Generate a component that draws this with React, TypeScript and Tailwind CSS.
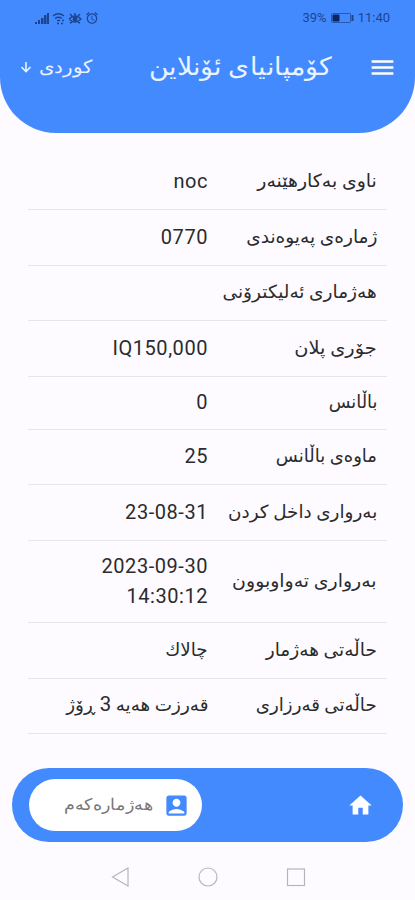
import React from 'react';
import { MdAccountBox, MdAlarm, MdHome, MdMenu } from 'react-icons/md';

interface AccountRow {
    label: string;
    value: React.ReactNode;
    height: string;
    labelScale: string;
    rtlValue?: boolean;
}

const rows: AccountRow[] = [
    { label: 'ناوی بەکارهێنەر', value: 'noc', height: 'h-14', labelScale: 'scale-x-[1.05]' },
    { label: 'ژمارەی پەیوەندی', value: '0770', height: 'h-14', labelScale: 'scale-x-[1.03]' },
    { label: 'هەژماری ئەلیکترۆنی', value: '', height: 'h-[55px]', labelScale: 'scale-x-[1.03]' },
    { label: 'جۆری پلان', value: 'IQ150,000', height: 'h-14', labelScale: 'scale-x-[1.075]' },
    { label: 'باڵانس', value: '0', height: 'h-[53px]', labelScale: 'scale-x-[.985]' },
    { label: 'ماوەی باڵانس', value: '25', height: 'h-[55px]', labelScale: 'scale-x-100' },
    { label: 'بەرواری داخل کردن', value: '23-08-31', height: 'h-14', labelScale: 'scale-x-[1.02]' },
    { label: 'بەرواری تەواوبوون', value: '2023-09-30 14:30:12', height: 'h-[82px]', labelScale: 'scale-x-[1.05]' },
    { label: 'حاڵەتی هەژمار', value: 'چالاك', height: 'h-14', labelScale: 'scale-x-[1.03]', rtlValue: true },
    {
        label: 'حاڵەتی قەرزاری',
        value: <>قەرزت هەیە <span className="text-xl leading-none">3</span> ڕۆژ</>,
        height: 'h-[55px]',
        labelScale: 'scale-x-[1.01]',
        rtlValue: true,
    },
];

function StatusBar() {
    return (
        <div className="flex h-9 items-center justify-between pl-[35px] pr-[25px] text-[#1d458f]">
            <div className="flex items-center gap-[3px]">
                <svg width="14" height="13" viewBox="0 0 14 13" fill="currentColor">
                    <path d="M0 10h2v2H0zM3 8h2v4H3zM6 6h2.500v6H6zM9 3h2.500v9H9zM12 1h2v11h-2z" />
                </svg>
                <svg width="13" height="13" viewBox="0 0 13 13" fill="none" stroke="currentColor" strokeWidth="1.5">
                    <path d="M1 4Q6.500-.5 12 4M3 6.500Q6.500 4 10 6.500M5 8.500h3M5 11.500h2M9 11.500h2M10 8.500h2" />
                </svg>
                <svg width="14" height="13" viewBox="0 0 14 13" fill="none" stroke="currentColor" strokeWidth="1.5">
                    <path d="M1 7Q7 1 13 7Q7 13 1 7M7 1v3M2 2l2 2M12 2l-2 2M2 11l2-1M12 11l-2-1" />
                    <circle cx="7" cy="7" r="1.700" fill="currentColor" />
                </svg>
                <MdAlarm size={14} />
            </div>
            <div className="flex items-center gap-1 font-[Roboto] text-[13px]">
                <span>39%</span>
                <svg width="23" height="10" viewBox="0 0 23 10" fill="none" stroke="currentColor">
                    <rect x=".5" y=".5" width="19" height="9" rx="1" strokeOpacity=".7" />
                    <path d="M2 2h6v6H2z" fill="#0b2560" stroke="#0b2560" />
                    <path d="M21.500 2v6" strokeWidth="2" />
                </svg>
                <span>11:40</span>
            </div>
        </div>
    );
}

export default function App() {
    return (
        <div className="flex h-[900px] w-[415px] flex-col overflow-hidden bg-[#fdfbff] font-[Roboto,'DejaVu_Sans',sans-serif]">
            <header className="h-[133px] shrink-0 rounded-b-[56px] bg-[#438aff]">
                <StatusBar />
                <div className="flex h-[62px] items-center text-[#e9f4ff]" dir="rtl">
                    <button className="mr-[18px] text-white"><MdMenu size={29} /></button>
                    <h1 className="mr-9 origin-right scale-x-[1.07] whitespace-nowrap text-[25px] font-light">کۆمپانیای ئۆنلاین</h1>
                    <div className="mr-auto ml-5 flex items-center gap-3">
                        <span className="origin-right scale-x-110 text-lg font-light">کوردی</span>
                        <svg width="12" height="12" viewBox="0 0 12 12" fill="none" stroke="currentColor" strokeWidth="1.600">
                            <path d="M6 1v9M1.500 6L6 10.500L10.500 6" />
                        </svg>
                    </div>
                </div>
            </header>

            <main className="mx-7 mt-[21px] h-[614px] shrink-0 text-[#2b2b2d]" dir="rtl">
                {rows.map((row) => (
                    <div key={row.label} className={`flex items-center border-b border-[#e9e4e8] pb-0.5 pr-2.5 ${row.height}`}>
                        <div className="w-[169px] shrink-0 whitespace-nowrap text-lg">
                            <span className={`inline-block origin-right ${row.labelScale}`}>{row.label}</span>
                        </div>
                        <div
                            dir={row.rtlValue ? 'rtl' : 'ltr'}
                            className={row.rtlValue ? 'origin-right scale-x-[1.02] whitespace-nowrap text-lg' : 'w-[120px] text-right text-xl leading-[30px] tracking-[.55px]'}
                        >
                            {row.value}
                        </div>
                    </div>
                ))}
            </main>

            <nav className="mx-3 flex h-[74px] shrink-0 items-center justify-between rounded-full bg-[#438aff] pl-[17px] pr-[29px]">
                <div className="flex h-[52px] w-[173px] items-center justify-end gap-2.5 rounded-full bg-white pr-3 text-[#777]">
                    <span className="origin-right scale-x-[1.09] text-base font-light" dir="rtl">هەژمارەکەم</span>
                    <MdAccountBox size={27} className="text-[#438aff]" />
                </div>
                <MdHome size={27} className="text-white" />
            </nav>

            <div className="flex h-[58px] items-center justify-center gap-[68px] pt-3">
                <svg width="20" height="20" viewBox="0 0 20 20" fill="none" stroke="#b7b5b9" strokeWidth="1.200"><path d="M18 1v18L2.500 10z" /></svg>
                <svg width="20" height="20" viewBox="0 0 20 20" fill="none" stroke="#b7b5b9" strokeWidth="1.200"><circle cx="10" cy="10" r="9" /></svg>
                <svg width="20" height="20" viewBox="0 0 20 20" fill="none" stroke="#b7b5b9" strokeWidth="1.200"><rect x="1.500" y="2" width="17" height="16.500" /></svg>
            </div>
        </div>
    );
}
